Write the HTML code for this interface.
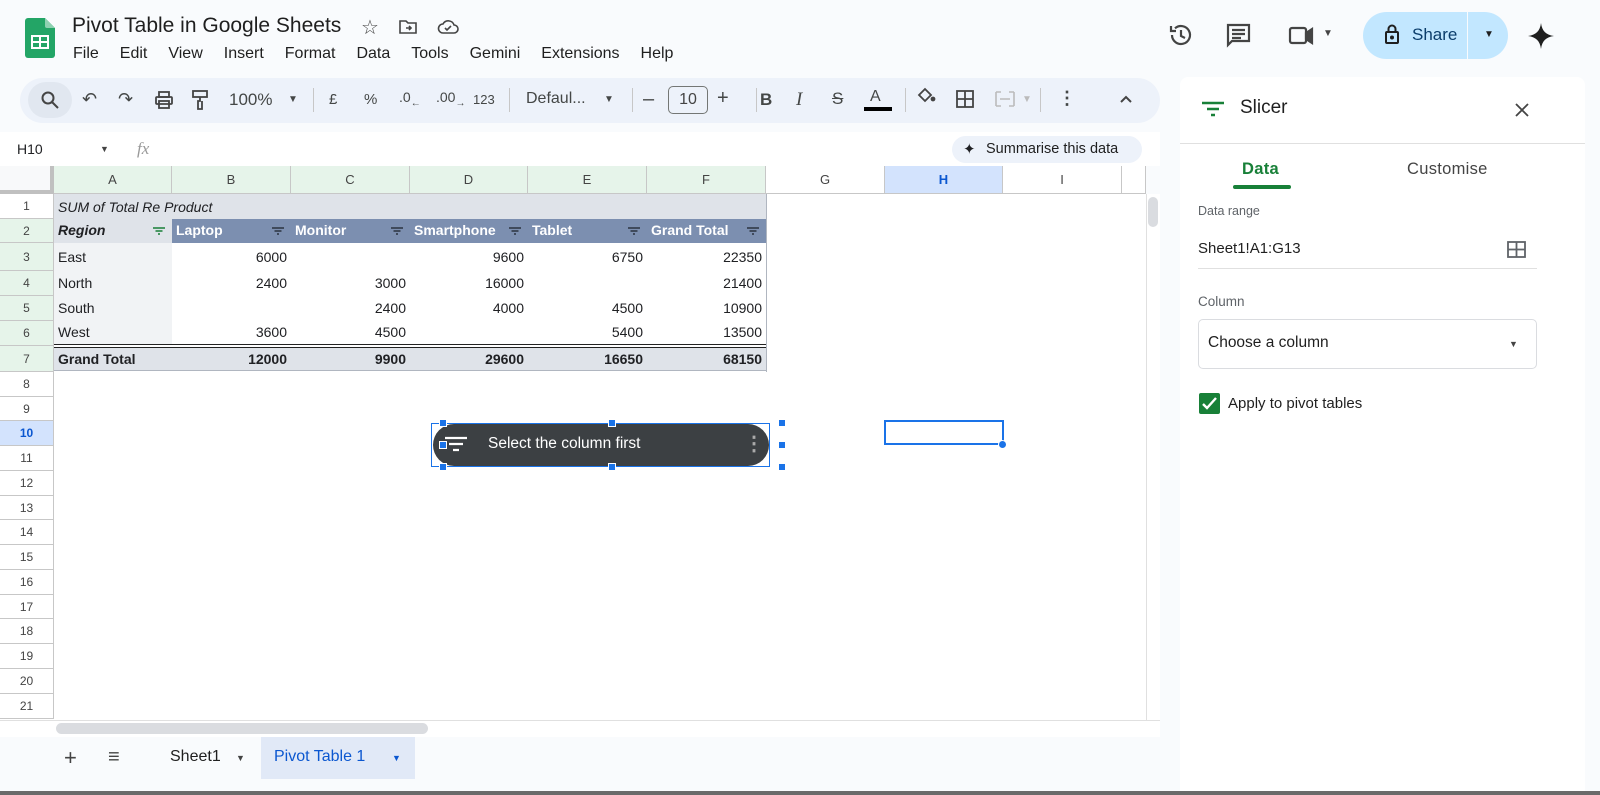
<!DOCTYPE html>
<html><head><meta charset="utf-8"><style>
*{box-sizing:border-box;margin:0;padding:0}
body{width:1600px;height:795px;background:#f9fbfd;font-family:"Liberation Sans",Arial,sans-serif;position:relative;overflow:hidden;color:#202124}
.a{position:absolute}
.menu span{margin-right:21px}
.tb{color:#444746;font-size:15px}
.ch{position:absolute;top:166px;height:28px;border-right:1px solid #c7c7c7;border-bottom:1px solid #c7c7c7;font-size:13px;color:#444;text-align:center;line-height:28px;background:#e6f4ea}
.rh{position:absolute;left:0;width:54px;border-bottom:1px solid #c7c7c7;border-right:1px solid #c7c7c7;font-size:12px;color:#444;text-align:center;background:#fff}
.c{position:absolute;font-size:14px;line-height:25px;padding:0 4px;white-space:nowrap}
.r{text-align:right}
.h{color:#fff;font-weight:bold;font-size:14px}
.fi{position:absolute;width:14px;height:10px}
.hd{position:absolute;width:8px;height:8px;background:#1a73e8;border:1px solid #fff}
</style></head><body>
<svg class="a" style="left:25px;top:18px" width="30" height="40" viewBox="0 0 30 40"><path d="M3 0H20L30 10V37a3 3 0 0 1-3 3H3a3 3 0 0 1-3-3V3a3 3 0 0 1 3-3z" fill="#23a566"/><path d="M20 0L30 10H22a2 2 0 0 1-2-2z" fill="#8ed1b1"/><rect x="6" y="17" width="18" height="14" fill="#fff"/><rect x="8" y="19" width="6" height="4" fill="#23a566"/><rect x="16" y="19" width="6" height="4" fill="#23a566"/><rect x="8" y="25" width="6" height="4" fill="#23a566"/><rect x="16" y="25" width="6" height="4" fill="#23a566"/></svg>
<div class="a" style="left:72px;top:14px;font-size:21px;color:#1f1f1f">Pivot Table in Google Sheets</div>
<div class="a" style="left:361px;top:15px;font-size:20px;color:#444">☆</div>
<svg class="a" style="left:398px;top:18px" width="20" height="18" viewBox="0 0 20 18" fill="none" stroke="#444" stroke-width="1.6"><path d="M2 3h6l2 2h8v10H2z"/><path d="M8 10h5M11 8l2 2-2 2"/></svg>
<svg class="a" style="left:437px;top:18px" width="22" height="18" viewBox="0 0 22 18" fill="none" stroke="#444" stroke-width="1.6"><path d="M6 15h11a4 4 0 0 0 0-8 6 6 0 0 0-11-1 4.5 4.5 0 0 0 0 9z"/><path d="M8 10l2 2 4-4"/></svg>
<div class="a menu" style="left:73px;top:45px;font-size:16px;color:#1f1f1f;white-space:nowrap"><span>File</span><span>Edit</span><span>View</span><span>Insert</span><span>Format</span><span>Data</span><span>Tools</span><span>Gemini</span><span>Extensions</span><span>Help</span></div>
<svg class="a" style="left:1168px;top:22px" width="26" height="26" viewBox="0 0 26 26" fill="none" stroke="#444" stroke-width="2.2"><path d="M4 13a9 9 0 1 0 3-6.7"/><path d="M3 4v5h5"/><path d="M13 8v6l4 2"/></svg>
<svg class="a" style="left:1226px;top:23px" width="26" height="26" viewBox="0 0 26 26" fill="none" stroke="#444" stroke-width="2.2"><path d="M2 2h21v16H6l-4 4z" /><path d="M6 7h13M6 11h13M6 15h9"/></svg>
<svg class="a" style="left:1288px;top:25px" width="26" height="22" viewBox="0 0 26 22" fill="none" stroke="#444" stroke-width="2.2"><rect x="2" y="3" width="16" height="15" rx="2"/><path d="M18 8l6-4v14l-6-4z" fill="#444"/></svg>
<div class="a" style="left:1323px;top:28px;font-size:10px;color:#444">▼</div>
<div class="a" style="left:1363px;top:12px;width:145px;height:47px;border-radius:24px;background:#c2e7ff"></div>
<div class="a" style="left:1467px;top:12px;width:1px;height:47px;background:#f9fbfd"></div>
<svg class="a" style="left:1384px;top:23px" width="16" height="22" viewBox="0 0 16 22" fill="none" stroke="#1f1f1f" stroke-width="2"><rect x="2" y="9" width="12" height="11" rx="1"/><path d="M4.5 9V6a3.5 3.5 0 0 1 7 0v3"/><circle cx="8" cy="14.5" r="1" fill="#1f1f1f"/></svg>
<div class="a" style="left:1412px;top:25px;font-size:17px;color:#0b3d6b">Share</div>
<div class="a" style="left:1484px;top:29px;font-size:10px;color:#1f1f1f">▼</div>
<svg class="a" style="left:1528px;top:23px" width="26" height="26" viewBox="0 0 26 26"><path d="M13 0C14 8 18 12 26 13 18 14 14 18 13 26 12 18 8 14 0 13 8 12 12 8 13 0z" fill="#1f1f1f"/></svg>
<div class="a" style="left:20px;top:78px;width:1140px;height:45px;border-radius:23px;background:#edf2fa"></div>
<div class="a" style="left:28px;top:82px;width:44px;height:36px;border-radius:18px;background:#e1e7f0"></div>
<svg class="a" style="left:40px;top:90px" width="20" height="20" viewBox="0 0 20 20" fill="none" stroke="#444" stroke-width="2"><circle cx="8" cy="8" r="5.5"/><path d="M12 12l6 6"/></svg>
<div class="a tb" style="left:82px;top:89px;font-size:18px">↶</div>
<div class="a tb" style="left:118px;top:89px;font-size:18px">↷</div>
<svg class="a" style="left:154px;top:90px" width="20" height="20" viewBox="0 0 20 20" fill="none" stroke="#444" stroke-width="1.8"><rect x="5" y="2" width="10" height="5"/><rect x="2" y="7" width="16" height="7" rx="1"/><rect x="5" y="11" width="10" height="7"/></svg>
<svg class="a" style="left:191px;top:89px" width="18" height="22" viewBox="0 0 18 22" fill="none" stroke="#444" stroke-width="1.8"><rect x="2" y="2" width="14" height="6"/><path d="M9 8v4h-2v8h4v-8"/></svg>
<div class="a tb" style="left:229px;top:90px;font-size:17px">100%</div>
<div class="a tb" style="left:288px;top:94px;font-size:10px">▼</div>
<div class="a" style="left:313px;top:88px;width:1px;height:24px;background:#c7c7c7"></div>
<div class="a tb" style="left:329px;top:91px">£</div>
<div class="a tb" style="left:364px;top:91px">%</div>
<div class="a tb" style="left:399px;top:89px;font-size:14px">.0<sub style="font-size:10px">←</sub></div>
<div class="a tb" style="left:436px;top:89px;font-size:14px">.00<sub style="font-size:10px">→</sub></div>
<div class="a tb" style="left:473px;top:92px;font-size:13px">123</div>
<div class="a" style="left:509px;top:88px;width:1px;height:24px;background:#c7c7c7"></div>
<div class="a tb" style="left:526px;top:90px;font-size:16px">Defaul...</div>
<div class="a tb" style="left:604px;top:94px;font-size:10px">▼</div>
<div class="a" style="left:632px;top:88px;width:1px;height:24px;background:#c7c7c7"></div>
<div class="a tb" style="left:643px;top:88px;font-size:20px">–</div>
<div class="a" style="left:668px;top:86px;width:40px;height:28px;border:1px solid #747775;border-radius:5px;text-align:center;line-height:26px;font-size:16px;color:#444">10</div>
<div class="a tb" style="left:717px;top:87px;font-size:20px">+</div>
<div class="a" style="left:756px;top:88px;width:1px;height:24px;background:#c7c7c7"></div>
<div class="a tb" style="left:760px;top:90px;font-size:17px;font-weight:bold">B</div>
<div class="a tb" style="left:796px;top:89px;font-size:19px;font-style:italic;font-family:'Liberation Serif',serif">I</div>
<div class="a tb" style="left:832px;top:89px;font-size:17px;text-decoration:line-through">S</div>
<div class="a tb" style="left:870px;top:88px;font-size:16px">A</div>
<div class="a" style="left:864px;top:107px;width:28px;height:4px;background:#000"></div>
<div class="a" style="left:905px;top:88px;width:1px;height:24px;background:#c7c7c7"></div>
<svg class="a" style="left:915px;top:86px" width="22" height="20" viewBox="0 0 22 20" fill="none" stroke="#444" stroke-width="1.8"><path d="M4 9l6-6 6 6-6 6z"/><circle cx="18" cy="13" r="1.5" fill="#444"/></svg>
<svg class="a" style="left:955px;top:89px" width="20" height="20" viewBox="0 0 20 20" fill="none" stroke="#444" stroke-width="1.8"><rect x="2" y="2" width="16" height="16"/><path d="M10 2v16M2 10h16"/></svg>
<svg class="a" style="left:994px;top:90px" width="22" height="18" viewBox="0 0 22 18" fill="none" stroke="#bbb" stroke-width="1.6"><path d="M2 2h5M2 16h5M2 2v14M20 2h-5M20 16h-5M20 2v14M6 9h10"/></svg>
<div class="a" style="left:1022px;top:94px;font-size:10px;color:#bbb">▼</div>
<div class="a" style="left:1040px;top:88px;width:1px;height:24px;background:#c7c7c7"></div>
<div class="a tb" style="left:1058px;top:88px;font-size:18px;font-weight:bold">⋮</div>
<svg class="a" style="left:1119px;top:94px" width="14" height="10" viewBox="0 0 14 10" fill="none" stroke="#444" stroke-width="2"><path d="M2 8l5-5 5 5"/></svg>
<div class="a" style="left:0;top:132px;width:1160px;height:34px;background:#fff"></div>
<div class="a" style="left:17px;top:141px;font-size:14px">H10</div>
<div class="a" style="left:100px;top:144px;font-size:9px;color:#444">▼</div>
<div class="a" style="left:137px;top:139px;font-size:17px;color:#999;font-style:italic;font-family:'Liberation Serif',serif">fx</div>
<div class="a" style="left:952px;top:136px;width:190px;height:27px;border-radius:14px;background:#edf2fa"></div>
<div class="a" style="left:963px;top:140px;font-size:15px">✦</div>
<div class="a" style="left:986px;top:141px;font-size:14.5px;color:#1f1f1f">Summarise this data</div>
<div class="a" style="left:0;top:166px;width:1146px;height:555px;background:#fff"></div>
<div class="a" style="left:0;top:166px;width:54px;height:28px;background:#f8f9fa;border-right:4px solid #c0c0c0;border-bottom:4px solid #c0c0c0"></div>
<div class="ch" style="left:54px;width:118px">A</div>
<div class="ch" style="left:172px;width:119px">B</div>
<div class="ch" style="left:291px;width:119px">C</div>
<div class="ch" style="left:410px;width:118px">D</div>
<div class="ch" style="left:528px;width:119px">E</div>
<div class="ch" style="left:647px;width:119px">F</div>
<div class="ch" style="left:766px;width:119px;background:#fff">G</div>
<div class="ch" style="left:885px;width:118px;background:#d3e3fd;color:#0b57d0;font-weight:bold">H</div>
<div class="ch" style="left:1003px;width:119px;background:#fff">I</div>
<div class="ch" style="left:1122px;width:24px;background:#fff"></div>
<div class="rh" style="top:194px;height:25px;line-height:25px;background:#fff">1</div>
<div class="rh" style="top:219px;height:24px;line-height:24px;background:#e6f4ea">2</div>
<div class="rh" style="top:243px;height:28px;line-height:28px;background:#e6f4ea">3</div>
<div class="rh" style="top:271px;height:25px;line-height:25px;background:#e6f4ea">4</div>
<div class="rh" style="top:296px;height:25px;line-height:25px;background:#e6f4ea">5</div>
<div class="rh" style="top:321px;height:25px;line-height:25px;background:#e6f4ea">6</div>
<div class="rh" style="top:346px;height:26px;line-height:26px;background:#e6f4ea">7</div>
<div class="rh" style="top:372px;height:25px;line-height:25px">8</div>
<div class="rh" style="top:397px;height:24px;line-height:24px">9</div>
<div class="rh" style="top:421px;height:25px;line-height:25px;background:#d3e3fd;color:#0b57d0;font-weight:bold">10</div>
<div class="rh" style="top:446px;height:25px;line-height:25px">11</div>
<div class="rh" style="top:471px;height:25px;line-height:25px">12</div>
<div class="rh" style="top:496px;height:24px;line-height:24px">13</div>
<div class="rh" style="top:520px;height:25px;line-height:25px">14</div>
<div class="rh" style="top:545px;height:25px;line-height:25px">15</div>
<div class="rh" style="top:570px;height:25px;line-height:25px">16</div>
<div class="rh" style="top:595px;height:24px;line-height:24px">17</div>
<div class="rh" style="top:619px;height:25px;line-height:25px">18</div>
<div class="rh" style="top:644px;height:25px;line-height:25px">19</div>
<div class="rh" style="top:669px;height:25px;line-height:25px">20</div>
<div class="rh" style="top:694px;height:25px;line-height:25px">21</div>
<div class="a" style="left:54px;top:194px;width:712px;height:25px;background:#dfe3e9"></div>
<div class="c" style="left:54px;top:195px;font-style:italic">SUM of Total Re Product</div>
<div class="a" style="left:54px;top:219px;width:712px;height:24px;background:#7c8fb0"></div>
<div class="a" style="left:54px;top:219px;width:118px;height:24px;background:#dfe3e9"></div>
<div class="a" style="left:54px;top:243px;width:118px;height:103px;background:#f1f3f5"></div>
<div class="c" style="left:54px;top:218px;font-weight:bold;font-style:italic">Region</div>
<div class="c h" style="left:172px;top:218px">Laptop</div>
<div class="c h" style="left:291px;top:218px">Monitor</div>
<div class="c h" style="left:410px;top:218px">Smartphone</div>
<div class="c h" style="left:528px;top:218px">Tablet</div>
<div class="c h" style="left:647px;top:218px">Grand Total</div>
<svg class="fi" style="left:152px;top:226px" viewBox="0 0 14 10" stroke="#188038" stroke-width="1.6"><path d="M1 2h12M3.5 5h7M6 8h2"/></svg>
<svg class="fi" style="left:271px;top:226px" viewBox="0 0 14 10" stroke="#2b3441" stroke-width="1.6"><path d="M1 2h12M3.5 5h7M6 8h2"/></svg>
<svg class="fi" style="left:390px;top:226px" viewBox="0 0 14 10" stroke="#2b3441" stroke-width="1.6"><path d="M1 2h12M3.5 5h7M6 8h2"/></svg>
<svg class="fi" style="left:508px;top:226px" viewBox="0 0 14 10" stroke="#2b3441" stroke-width="1.6"><path d="M1 2h12M3.5 5h7M6 8h2"/></svg>
<svg class="fi" style="left:627px;top:226px" viewBox="0 0 14 10" stroke="#2b3441" stroke-width="1.6"><path d="M1 2h12M3.5 5h7M6 8h2"/></svg>
<svg class="fi" style="left:746px;top:226px" viewBox="0 0 14 10" stroke="#2b3441" stroke-width="1.6"><path d="M1 2h12M3.5 5h7M6 8h2"/></svg>
<div class="c" style="left:54px;top:245px">East</div>
<div class="c r" style="left:172px;top:245px;width:119px">6000</div>
<div class="c r" style="left:410px;top:245px;width:118px">9600</div>
<div class="c r" style="left:528px;top:245px;width:119px">6750</div>
<div class="c r" style="left:647px;top:245px;width:119px">22350</div>
<div class="c" style="left:54px;top:271px">North</div>
<div class="c r" style="left:172px;top:271px;width:119px">2400</div>
<div class="c r" style="left:291px;top:271px;width:119px">3000</div>
<div class="c r" style="left:410px;top:271px;width:118px">16000</div>
<div class="c r" style="left:647px;top:271px;width:119px">21400</div>
<div class="c" style="left:54px;top:296px">South</div>
<div class="c r" style="left:291px;top:296px;width:119px">2400</div>
<div class="c r" style="left:410px;top:296px;width:118px">4000</div>
<div class="c r" style="left:528px;top:296px;width:119px">4500</div>
<div class="c r" style="left:647px;top:296px;width:119px">10900</div>
<div class="c" style="left:54px;top:320px">West</div>
<div class="c r" style="left:172px;top:320px;width:119px">3600</div>
<div class="c r" style="left:291px;top:320px;width:119px">4500</div>
<div class="c r" style="left:528px;top:320px;width:119px">5400</div>
<div class="c r" style="left:647px;top:320px;width:119px">13500</div>
<div class="a" style="left:54px;top:344px;width:712px;height:4px;border-top:1px solid #222;border-bottom:1px solid #222;background:#fff"></div>
<div class="a" style="left:54px;top:348px;width:712px;height:23px;background:#dfe3e9;border-bottom:1px solid #b0b6c0"></div>
<div class="c" style="left:54px;top:347px;font-weight:bold">Grand Total</div>
<div class="c r" style="left:172px;top:347px;width:119px;font-weight:bold">12000</div>
<div class="c r" style="left:291px;top:347px;width:119px;font-weight:bold">9900</div>
<div class="c r" style="left:410px;top:347px;width:118px;font-weight:bold">29600</div>
<div class="c r" style="left:528px;top:347px;width:119px;font-weight:bold">16650</div>
<div class="c r" style="left:647px;top:347px;width:119px;font-weight:bold">68150</div>
<div class="a" style="left:766px;top:194px;width:1px;height:178px;background:#b0b6c0"></div>
<div class="a" style="left:884px;top:420px;width:120px;height:25px;border:2px solid #1a73e8"></div>
<div class="a" style="left:998px;top:440px;width:9px;height:9px;border-radius:50%;background:#1a73e8;border:1px solid #fff"></div>
<div class="a" style="left:431px;top:423px;width:339px;height:44px;border:1px solid #1a73e8"></div>
<div class="a" style="left:433px;top:424px;width:336px;height:42px;border-radius:21px;background:#3c4043"></div>
<svg class="a" style="left:444px;top:436px" width="24" height="18" viewBox="0 0 24 18" stroke="#fff" stroke-width="2.2"><path d="M1 2h22M5 8h14M9 14h6"/></svg>
<div class="a" style="left:488px;top:435px;font-size:15.5px;color:#fff">Select the column first</div>
<div class="a" style="left:744px;top:431px;font-size:20px;color:#aaa;font-weight:bold">⋮</div>
<div class="hd" style="left:439px;top:419px"></div><div class="hd" style="left:608px;top:419px"></div><div class="hd" style="left:778px;top:419px"></div>
<div class="hd" style="left:439px;top:441px"></div><div class="hd" style="left:778px;top:441px"></div>
<div class="hd" style="left:439px;top:463px"></div><div class="hd" style="left:608px;top:463px"></div><div class="hd" style="left:778px;top:463px"></div>
<div class="a" style="left:1146px;top:194px;width:14px;height:527px;background:#fff;border-left:1px solid #e0e0e0"></div>
<div class="a" style="left:1148px;top:197px;width:10px;height:30px;border-radius:5px;background:#dadce0"></div>
<div class="a" style="left:0;top:720px;width:1160px;height:17px;background:#fff;border-top:1px solid #e0e0e0"></div>
<div class="a" style="left:56px;top:723px;width:372px;height:11px;border-radius:6px;background:#dadce0"></div>
<div class="a" style="left:64px;top:745px;font-size:22px;color:#444">+</div>
<div class="a" style="left:108px;top:746px;font-size:20px;color:#444">≡</div>
<div class="a" style="left:170px;top:748px;font-size:16px;color:#1f1f1f">Sheet1</div>
<div class="a" style="left:236px;top:753px;font-size:9px;color:#444">▼</div>
<div class="a" style="left:261px;top:737px;width:154px;height:42px;background:#e1e9f7"></div>
<div class="a" style="left:274px;top:748px;font-size:16px;color:#0b57d0">Pivot Table 1</div>
<div class="a" style="left:392px;top:753px;font-size:9px;color:#0b57d0">▼</div>
<div class="a" style="left:0;top:791px;width:1600px;height:4px;background:#6a6a6a"></div>
<div class="a" style="left:1180px;top:77px;width:405px;height:714px;background:#fff;border-radius:8px 8px 0 0"></div>
<svg class="a" style="left:1202px;top:101px" width="22" height="16" viewBox="0 0 22 16" stroke="#188038" stroke-width="2.4"><path d="M0 2h22M5 8h12M9 14h4"/></svg>
<div class="a" style="left:1240px;top:97px;font-size:19px;color:#1f1f1f">Slicer</div>
<svg class="a" style="left:1515px;top:103px" width="14" height="14" viewBox="0 0 14 14" stroke="#444" stroke-width="1.8"><path d="M1 1l12 12M13 1L1 13"/></svg>
<div class="a" style="left:1180px;top:143px;width:405px;height:1px;background:#e0e0e0"></div>
<div class="a" style="left:1242px;top:160px;font-size:16.5px;color:#188038;font-weight:bold;letter-spacing:.3px">Data</div>
<div class="a" style="left:1233px;top:185px;width:58px;height:4px;border-radius:2px;background:#188038"></div>
<div class="a" style="left:1407px;top:160px;font-size:16.5px;color:#444;letter-spacing:.3px">Customise</div>
<div class="a" style="left:1198px;top:204px;font-size:12.5px;color:#5f6368">Data range</div>
<div class="a" style="left:1198px;top:240px;font-size:15px;color:#1f1f1f">Sheet1!A1:G13</div>
<svg class="a" style="left:1507px;top:241px" width="19" height="17" viewBox="0 0 19 17" fill="none" stroke="#5f6368" stroke-width="1.8"><rect x="1" y="1" width="17" height="15"/><path d="M9.5 1v15M1 8.5h17"/></svg>
<div class="a" style="left:1198px;top:268px;width:339px;height:1px;background:#e0e0e0"></div>
<div class="a" style="left:1198px;top:294px;font-size:13.5px;color:#5f6368">Column</div>
<div class="a" style="left:1198px;top:319px;width:339px;height:50px;border:1px solid #dadce0;border-radius:5px"></div>
<div class="a" style="left:1208px;top:334px;font-size:15.5px;color:#1f1f1f">Choose a column</div>
<div class="a" style="left:1509px;top:339px;font-size:9px;color:#444">▼</div>
<div class="a" style="left:1199px;top:393px;width:21px;height:21px;border-radius:2px;background:#188038"></div>
<svg class="a" style="left:1202px;top:397px" width="15" height="13" viewBox="0 0 15 13" fill="none" stroke="#fff" stroke-width="2.4"><path d="M1 7l4 4 9-10"/></svg>
<div class="a" style="left:1228px;top:395px;font-size:15px;color:#1f1f1f">Apply to pivot tables</div>
</body></html>
